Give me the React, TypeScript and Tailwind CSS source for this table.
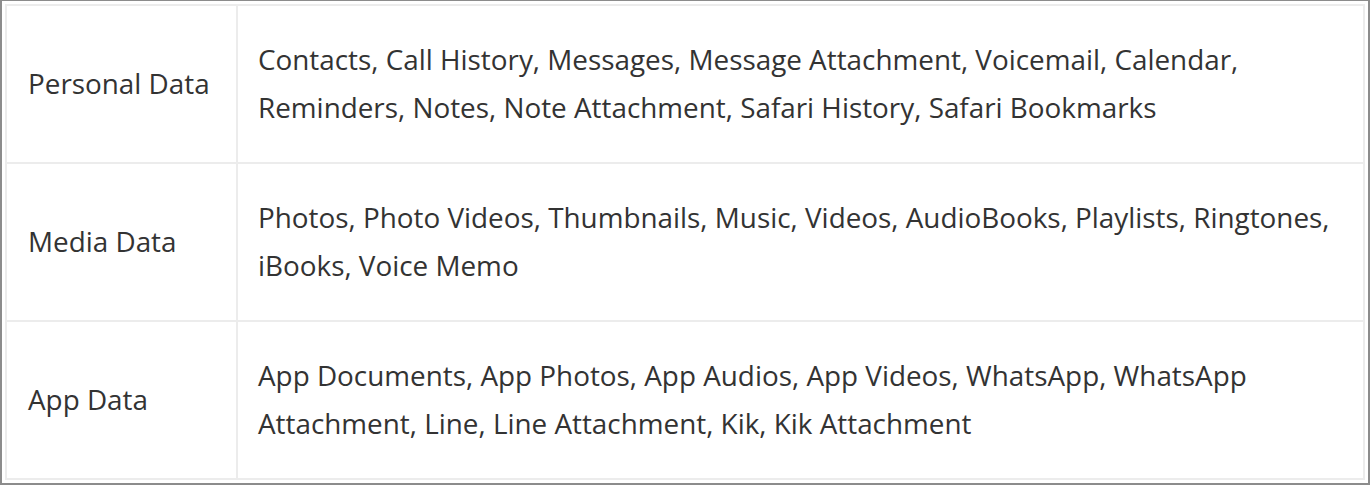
import React from "react";

const rows = [
  {
    label: "Personal Data",
    items:
      "Contacts, Call History, Messages, Message Attachment, Voicemail, Calendar, Reminders, Notes, Note Attachment, Safari History, Safari Bookmarks",
  },
  {
    label: "Media Data",
    items:
      "Photos, Photo Videos, Thumbnails, Music, Videos, AudioBooks, Playlists, Ringtones, iBooks, Voice Memo",
  },
  {
    label: "App Data",
    items:
      "App Documents, App Photos, App Audios, App Videos, WhatsApp, WhatsApp Attachment, Line, Line Attachment, Kik, Kik Attachment",
  },
];

export default function App() {
  return (
    <div className="w-[1370px] h-[485px] bg-white border-t border-l-2 border-r-2 border-b-2 border-[#8c8c8c] pt-[3px] pl-[3px] pr-[1px] font-['Open_Sans',sans-serif] text-[#333333]">
      <table className="w-[1360px] border-collapse border-2 border-[#ececec]">
        <tbody>
          {rows.map((row) => (
            <tr key={row.label} className="h-[158px]">
              <td className="w-[231px] border-2 border-[#ececec] px-[21px] pb-[2px] text-[27.85px] leading-[48px] align-middle">
                {row.label}
              </td>
              <td className="border-2 border-[#ececec] px-[20px] pb-[2px] text-[27.85px] leading-[48px] align-middle">
                {row.items}
              </td>
            </tr>
          ))}
        </tbody>
      </table>
    </div>
  );
}
